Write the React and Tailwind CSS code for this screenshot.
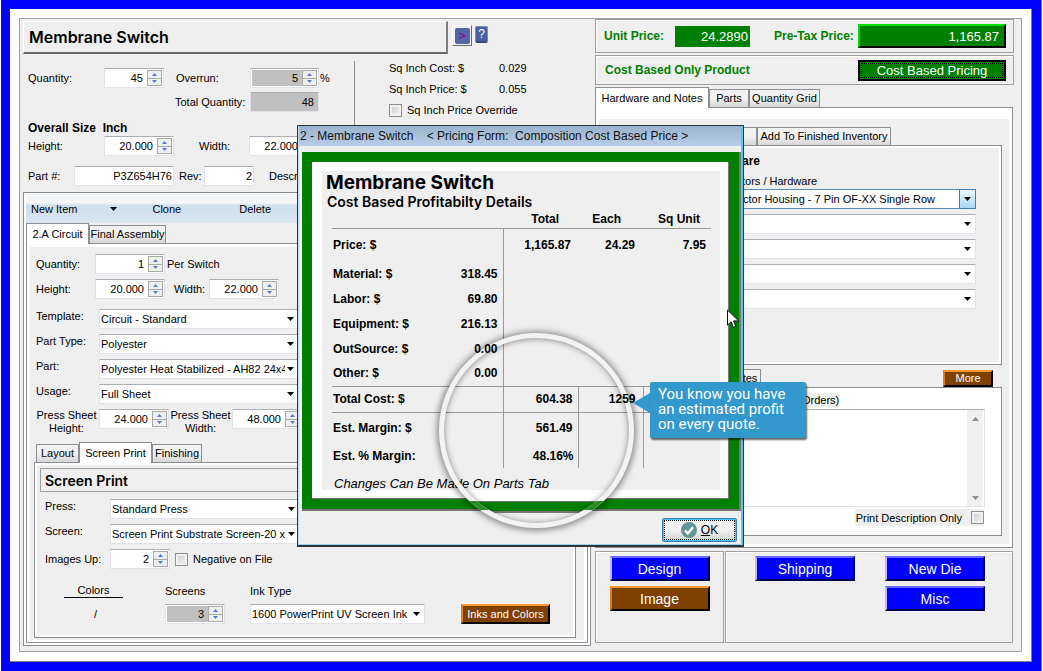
import React, { useId } from "react";

function Caret({ className = "" }) {
  return (
    <svg className={className} width="7" height="4" viewBox="0 0 7 4" aria-hidden="true">
      <path d="M0 0h7L3.5 4z" fill="currentColor" />
    </svg>
  );
}

function Spinner({ label, value, className = "", labelClass = "", gray = false, bare = false }) {
  const id = useId();
  return (
    <>
      {!bare && <label htmlFor={id} className={`shrink-0 ${labelClass}`}>{label}</label>}
      <div className={`flex h-5 shrink-0 items-center border border-[#e2e3ea] border-t-[#abadb3] bg-white p-px ${className}`}>
        <input
          id={id}
          aria-label={bare ? label : undefined}
          defaultValue={value}
          className={`h-full w-full min-w-0 pr-1 text-right outline-none ${gray ? "bg-[#c0c0c0]" : "bg-white"}`}
        />
        <div className="flex h-full w-[15px] shrink-0 flex-col border border-[#a9a9a9] bg-[#efefef]">
          <button type="button" aria-label={`Increase ${label}`} className="flex flex-1 items-center justify-center border-b border-[#a9a9a9] text-[#5b7ac7]">
            <svg width="5" height="3" viewBox="0 0 5 3"><path d="M0 3h5L2.5 0z" fill="currentColor" /></svg>
          </button>
          <button type="button" aria-label={`Decrease ${label}`} className="flex flex-1 items-center justify-center text-[#5b7ac7]">
            <svg width="5" height="3" viewBox="0 0 5 3"><path d="M0 0h5L2.5 3z" fill="currentColor" /></svg>
          </button>
        </div>
      </div>
    </>
  );
}

function Field({ label, value, className = "", labelClass = "" }) {
  const id = useId();
  return (
    <>
      <label htmlFor={id} className={`shrink-0 ${labelClass}`}>{label}</label>
      <input
        id={id}
        defaultValue={value}
        className={`h-5 min-w-0 shrink-0 border border-[#e2e3ea] border-t-[#abadb3] px-1 text-right outline-none ${className}`}
      />
    </>
  );
}

function Select({ id, label, value, className = "", pad = "pl-px", active = false }) {
  return (
    <div className={`relative flex h-5 ${className}`}>
      <select
        id={id}
        aria-label={label}
        defaultValue={value}
        className={`h-full w-full appearance-none overflow-hidden border bg-white pr-[13px] text-clip whitespace-nowrap outline-none ${pad} ${active ? "border-[#5a8cb8]" : "border-[#e2e3ea] border-t-[#abadb3]"}`}
      >
        <option>{value}</option>
      </select>
      <span className={`pointer-events-none absolute inset-y-0 right-0 flex w-[17px] items-center justify-center ${active ? "border border-[#3c7fb1] bg-linear-to-b from-[#eaf6fd] to-[#a7d9f5]" : ""}`}>
        <Caret />
      </span>
    </div>
  );
}

function SelectRow({ label, value, labelClass, className }) {
  const id = useId();
  return (
    <div className="flex h-5 items-start">
      <label htmlFor={id} className={`shrink-0 leading-[14px] ${labelClass}`}>{label}</label>
      <Select id={id} value={value} className={className} />
    </div>
  );
}

function Check({ label, before = false, className = "" }) {
  return (
    <label className={`flex items-center ${before ? "flex-row-reverse gap-[9px]" : "gap-[5px]"} ${className}`}>
      <input
        type="checkbox"
        className="h-[13px] w-[13px] shrink-0 appearance-none border border-[#8e8f8f] bg-linear-to-br from-[#c8ccd2] to-[#f6f6f6] outline-2 -outline-offset-3 outline-[#f2f2f2]"
      />
      <span>{label}</span>
    </label>
  );
}

function Tab({ children, active = false, className = "" }) {
  return (
    <button
      type="button"
      role="tab"
      aria-selected={active}
      className={`shrink-0 border border-b-0 border-[#8c8e94] text-center leading-none whitespace-nowrap ${active ? "relative -mb-px h-[21px] bg-white" : "h-[18px] bg-linear-to-b from-[#f2f2f2] from-50% to-[#d6d6d6]"} ${className}`}
    >
      {children}
    </button>
  );
}

const BROWN = "border-2 border-t-[#ff9933] border-l-[#e07c1c] border-r-black border-b-black bg-[#804000] text-white leading-none";
const BLUE = "border-2 border-t-[#6666ff] border-l-[#b8b8ff] border-r-[#000050] border-b-[#000050] bg-[#0000ff] text-white leading-none";

function ActionButton({ children, tone }) {
  return (
    <button type="button" className={`h-[25px] w-[100px] text-[14px] ${tone}`}>{children}</button>
  );
}

function LeftColumn() {
  return (
    <div className="min-w-0">
      <div className="mt-[2px] ml-[3px] flex items-start">
        <div className="flex h-[33px] w-[425px] items-center border-t border-r-2 border-b-2 border-l border-t-white border-r-[#808080] border-b-[#696969] border-l-white pl-[5px]">
          <h1 className="font-['Inter',sans-serif] text-[16px] font-semibold">Membrane Switch</h1>
        </div>
        <button type="button" aria-label="Next" className="mt-1 ml-1 flex h-[21px] w-5 items-center justify-center border border-t-white border-r-[#696969] border-b-[#696969] border-l-white">
          <span className="flex h-4 w-[15px] items-center justify-center rounded-xs bg-[#5566a8] text-[12px] leading-none text-[#800080]">&gt;</span>
        </button>
        <button type="button" aria-label="Help" className="mt-[5px] ml-[3px] h-[17px] w-[13px] rounded-xs border border-b-2 border-[#7c8cc0] border-b-[#3a4674] bg-[#4a5f9e] text-[12px] leading-none text-white">?</button>
      </div>

      <div className="flex">
        <div className="w-[334px] shrink-0 pt-[14px] pl-2">
          <div className="flex h-5 items-center">
            <Spinner label="Quantity:" value="45" labelClass="w-[76px]" className="w-[60px]" />
            <Spinner label="Overrun:" value="5" gray labelClass="ml-3 w-[74px]" className="w-[69px]" />
            <span className="ml-px">%</span>
          </div>
          <div className="mt-1 flex h-5 items-center pl-[147px]">
            <Field label="Total Quantity:" value="48" labelClass="w-[75px]" className="w-[69px] bg-[#c0c0c0]" />
          </div>
          <h2 className="mt-2 h-4 text-[12px] leading-4 font-bold whitespace-pre">Overall Size  Inch</h2>
          <div className="flex h-5 items-center">
            <Spinner label="Height:" value="20.000" labelClass="w-[76px]" className="w-[70px]" />
            <Spinner label="Width:" value="22.000" labelClass="ml-[25px] w-[50px]" className="w-[70px]" />
          </div>
          <div className="mt-[10px] mb-[6px] flex h-5 items-center">
            <Field label="Part #:" value="P3Z654H76" labelClass="w-[46px]" className="w-[100px] bg-white px-px" />
            <Field label="Rev:" value="2" labelClass="ml-[5px] w-[25px]" className="w-[50px] bg-white px-px" />
            <span className="ml-[15px]">Descr</span>
          </div>
        </div>
        <div className="mt-[7px] flex flex-col gap-[7px] self-start border-l border-[#8c8c8c] pb-12 pl-[34px] leading-[14px]">
          <div className="flex"><span className="w-[110px]">Sq Inch Cost: $</span><span>0.029</span></div>
          <div className="flex"><span className="w-[110px]">Sq Inch Price: $</span><span>0.055</span></div>
          <Check label="Sq Inch Price Override" />
        </div>
      </div>

      <div className="mr-[2px] ml-[3px] border border-[#8c8e94] bg-white p-[2px] pt-px">
        <div className="flex h-[29px] items-center bg-linear-to-b from-[#f4f6fa] from-30% via-[#d0dfee] via-40% to-[#d9e6f2] pl-[5px]">
          <button type="button" className="flex items-center gap-[33px]">New Item <Caret /></button>
          <button type="button" className="ml-[35px]">Clone</button>
          <button type="button" className="ml-[58px]">Delete</button>
        </div>
        <div role="tablist" className="flex h-5 items-end bg-[#efefef]">
          <Tab active className="w-[63px]">2.A Circuit</Tab>
          <Tab className="w-[77px]">Final Assembly</Tab>
        </div>
        <div className="border border-[#8c8e94]">
          <div className="border-[3px] border-b-2 border-white bg-[#efefef] pt-[7px]">
            <div className="flex flex-col gap-[5px] pl-[6px]">
              <div className="flex h-5 items-center">
                <Spinner label="Quantity:" value="1" labelClass="w-[59px]" className="w-[70px]" />
                <span className="ml-[2px]">Per Switch</span>
              </div>
              <div className="mb-[5px] flex h-5 items-center">
                <Spinner label="Height:" value="20.000" labelClass="w-[59px]" className="w-[70px]" />
                <Spinner label="Width:" value="22.000" labelClass="ml-[9px] w-[35px]" className="w-[70px]" />
              </div>
              <SelectRow label="Template:" value="Circuit - Standard" labelClass="w-[63px]" className="w-[200px]" />
              <SelectRow label="Part Type:" value="Polyester" labelClass="w-[63px]" className="w-[200px]" />
              <SelectRow label="Part:" value="Polyester Heat Stabilized - AH82 24x4" labelClass="w-[63px]" className="w-[200px]" />
              <SelectRow label="Usage:" value="Full Sheet" labelClass="w-[63px]" className="w-[200px]" />
              <div className="flex h-5 items-start leading-[13px]">
                <Spinner label="Press Sheet Height:" value="24.000" labelClass="mr-[2px] w-[61px] text-center" className="w-[70px]" />
                <Spinner label="Press Sheet Width:" value="48.000" labelClass="mr-px ml-px w-[61px] text-center" className="w-[70px]" />
              </div>
            </div>

            <div role="tablist" className="mt-[13px] ml-[6px] flex h-5 items-end">
              <Tab className="w-[43px]">Layout</Tab>
              <Tab active className="w-[73px]">Screen Print</Tab>
              <Tab className="w-[50px]">Finishing</Tab>
            </div>
            <div className="mr-2 mb-[2px] ml-1 border border-[#8c8e94]">
              <div className="border-2 border-white bg-[#efefef] pb-[11px]">
                <h2 className="mx-[3px] mt-[3px] h-6 border border-[#a0a0a0] pl-1 font-['Inter',sans-serif] text-[14px] leading-6 font-semibold">Screen Print</h2>
                <div className="mt-[7px] flex flex-col gap-[5px] pl-2">
                  <SelectRow label="Press:" value="Standard Press" labelClass="w-[65px]" className="w-[190px]" />
                  <SelectRow label="Screen:" value="Screen Print Substrate Screen-20 x" labelClass="w-[65px]" className="w-[190px]" />
                  <div className="flex h-5 items-center">
                    <Spinner label="Images Up:" value="2" labelClass="w-[65px]" className="w-[60px]" />
                    <Check label="Negative on File" className="ml-[5px]" />
                  </div>
                </div>
                <div className="mt-[15px] grid grid-cols-[120px_85px_211px_auto] items-center justify-start gap-y-[6px] pl-2">
                  <span className="ml-[19px] w-[59px] border-b border-black text-center leading-[13px]">Colors</span>
                  <span>Screens</span>
                  <span>Ink Type</span>
                  <span />
                  <span className="ml-[49px]">/</span>
                  <div className="flex">
                    <Spinner label="Screens" value="3" gray bare className="w-[60px]" />
                  </div>
                  <Select label="Ink Type" value="1600 PowerPrint UV Screen Ink" className="w-[175px]" />
                  <button type="button" className={`h-5 w-[89px] whitespace-nowrap ${BROWN}`}>Inks and Colors</button>
                </div>
              </div>
            </div>
          </div>
        </div>
      </div>
    </div>
  );
}

function RightColumn() {
  return (
    <div className="min-w-0 pl-[2px] leading-[14px]">
      <div className="flex h-[34px] items-center border border-[#a0a0a0] pr-[7px] pl-2 text-[12px] shadow-[inset_1px_1px_0_#fff]">
        <span className="w-[71px] font-bold text-[#008000]">Unit Price:</span>
        <output className="h-[21px] w-[75px] bg-[#008000] pr-[2px] text-right text-[13px] leading-[21px] text-white">24.2890</output>
        <span className="ml-6 font-bold text-[#008000]">Pre-Tax Price:</span>
        <button type="button" className="ml-auto h-6 w-[148px] border-2 border-t-[#00e000] border-r-black border-b-black border-l-[#00e000] bg-[#008000] pr-[5px] text-right text-[13px] leading-none text-white">1,165.87</button>
      </div>
      <div className="mt-[2px] flex h-[30px] items-center border border-[#a0a0a0] pr-[7px] pl-[9px] shadow-[inset_1px_1px_0_#fff]">
        <span className="text-[12px] font-bold text-[#008000]">Cost Based Only Product</span>
        <button type="button" className="ml-auto h-[21px] w-[148px] border-2 border-black bg-[#008000] p-px text-[13px] leading-none text-white">
          <span className="flex h-full items-center justify-center border border-dotted border-black">Cost Based Pricing</span>
        </button>
      </div>

      <div role="tablist" className="mt-[2px] flex h-5 items-end">
        <Tab active className="w-[114px]">Hardware and Notes</Tab>
        <Tab className="w-10">Parts</Tab>
        <Tab className="w-[71px]">Quantity Grid</Tab>
      </div>
      <div className="mr-px border border-[#8c8e94]">
        <div className="border-[3px] border-t-[11px] border-white bg-[#efefef] px-1 pt-2 pr-[7px] pb-2">
          <div role="tablist" className="flex h-[18px] items-end">
            <Tab className="w-[154px]" />
            <Tab className="w-[134px]">Add To Finished Inventory</Tab>
          </div>
          <div className="border border-[#8c8e94]">
            <div className="border-2 border-white pt-[6px] pr-[23px] pb-[53px] pl-[136px]">
              <h3 className="text-[12px] font-bold">are</h3>
              <p className="mt-[6px]">tors / Hardware</p>
              <div className="mt-px flex flex-col gap-[5px]">
                <Select label="Hardware 1" value="ctor Housing - 7 Pin OF-XX Single Row" pad="pl-0" active />
                <Select label="Hardware 2" value="" />
                <Select label="Hardware 3" value="" />
                <Select label="Hardware 4" value="" />
                <Select label="Hardware 5" value="" />
              </div>
            </div>
          </div>
          <div className="mt-[5px] flex h-[17px] items-end justify-between pr-[9px] pl-[136px]">
            <Tab className="w-[22px]">tes</Tab>
            <button type="button" className={`h-[17px] w-[50px] ${BROWN}`}>More</button>
          </div>
          <div className="border border-[#8c8e94] bg-white pt-[5px] pr-4 pb-[9px] pl-[136px]">
            <label htmlFor="order-note" className="ml-[62px] block w-[38px] bg-[#efefef]">Orders)</label>
            <div className="mt-[2px] flex h-[98px] border border-[#e2e3ea] border-t-[#abadb3] pr-px">
              <textarea id="order-note" className="min-w-0 flex-1 resize-none outline-none" />
              <div className="flex w-4 flex-col justify-between bg-[#efefef] text-[#8a8a8a]">
                <button type="button" aria-label="Scroll up" className="flex h-[17px] items-center justify-center"><Caret className="rotate-180" /></button>
                <button type="button" aria-label="Scroll down" className="flex h-[17px] items-center justify-center"><Caret /></button>
              </div>
            </div>
            <Check before label="Print Description Only" className="mt-[2px] mr-px ml-auto h-[17px] w-fit bg-[#efefef] pl-px" />
          </div>
        </div>
      </div>

      <div className="mt-[3px] mr-px flex h-[92px] gap-px">
        <div className="flex w-[129px] shrink-0 flex-col items-center gap-[5px] border border-[#a0a0a0] pt-1 shadow-[inset_1px_1px_0_#fff]">
          <ActionButton tone={BLUE}>Design</ActionButton>
          <ActionButton tone={BROWN}>Image</ActionButton>
        </div>
        <div className="grid min-w-0 flex-1 grid-cols-[100px_100px] content-start gap-x-[30px] gap-y-[5px] border border-[#a0a0a0] pt-1 pl-[29px] shadow-[inset_1px_1px_0_#fff]">
          <ActionButton tone={BLUE}>Shipping</ActionButton>
          <ActionButton tone={BLUE}>New Die</ActionButton>
          <span />
          <ActionButton tone={BLUE}>Misc</ActionButton>
        </div>
      </div>
    </div>
  );
}

const COSTS = [
  ["Material: $", "318.45"],
  ["Labor: $", "69.80"],
  ["Equipment: $", "216.13"],
  ["OutSource: $", "0.00"],
  ["Other: $", "0.00"],
];

function PricingDialog() {
  return (
    <section role="dialog" aria-label="Pricing Form" className="absolute top-[125px] left-[297px] h-[422px] w-[447px] border border-b-2 border-[#333] bg-[#efefef]">
      <div className="flex h-full flex-col border-r-2 border-b border-l border-r-[#5fc4ee] border-b-[#9bd0ea] border-l-[#c4dcf0]">
        <header className="h-5 bg-linear-to-b from-[#9ab3ce] to-[#b9cee8] pl-px text-[12px] leading-[21px] whitespace-pre text-[#111]">2 - Membrane Switch    &lt; Pricing Form:  Composition Cost Based Price &gt;</header>
        <div className="mt-[6px] ml-[3px] border-r-2 border-b-2 border-r-[#777] border-b-[#777]">
          <div className="border-10 border-[#008000] bg-white">
            <div className="border-r border-b border-[#777] bg-white pt-[9px] pr-2 pb-2 pl-[10px]">
              <div className="h-[319px] bg-[#efefef]">
                <h2 className="pt-[1px] pl-1 font-['Inter',sans-serif] text-[19px] leading-[22px] font-bold">Membrane Switch</h2>
                <h3 className="pl-[5px] font-['Inter',sans-serif] text-[14px] leading-4 font-semibold">Cost Based Profitabilty Details</h3>
                <table className="ml-[10px] w-[379px] table-fixed border-collapse text-[12px] leading-none font-bold">
                  <colgroup>
                    <col className="w-[90px]" />
                    <col className="w-[81px]" />
                    <col className="w-[75px]" />
                    <col className="w-[65px]" />
                    <col className="w-[68px]" />
                  </colgroup>
                  <thead>
                    <tr className="h-[18px] border-b border-[#999] text-right">
                      <th />
                      <th />
                      <th className="pr-[19px]">Total</th>
                      <th className="pr-[22px]">Each</th>
                      <th className="pr-[11px]">Sq Unit</th>
                    </tr>
                  </thead>
                  <tbody className="text-right">
                    <tr className="h-[33px]">
                      <th className="pl-px text-left">Price: $</th>
                      <td className="border-r border-[#999]" />
                      <td className="pr-[7px]">1,165.87</td>
                      <td className="pr-2">24.29</td>
                      <td className="pr-[5px]">7.95</td>
                    </tr>
                    {COSTS.map(([name, cost]) => (
                      <tr key={name} className="h-[25px]">
                        <th className="pl-px text-left whitespace-nowrap">{name}</th>
                        <td className="border-r border-[#999] pr-[5px]">
                          <span className="relative z-10">{cost}</span>
                        </td>
                        <td />
                        <td />
                        <td />
                      </tr>
                    ))}
                    <tr className="h-[26px] border-y border-[#999]">
                      <th className="pl-px text-left">Total Cost: $</th>
                      <td className="border-r border-[#999]" />
                      <td className="border-r border-[#999] pr-[5px]">604.38</td>
                      <td className="border-r border-[#999] pr-[7px]">
                        <span className="relative z-10">1259</span>
                      </td>
                      <td />
                    </tr>
                    <tr className="h-[32px]">
                      <th className="pl-px text-left">Est. Margin: $</th>
                      <td className="border-r border-[#999]" />
                      <td className="border-r border-[#999] pr-[5px]">561.49</td>
                      <td className="border-r border-[#999]" />
                      <td />
                    </tr>
                    <tr className="h-[24px]">
                      <th className="pl-px text-left">Est. % Margin:</th>
                      <td className="border-r border-[#999]" />
                      <td className="border-r border-[#999] pr-1">48.16%</td>
                      <td className="border-r border-[#999]" />
                      <td />
                    </tr>
                  </tbody>
                </table>
                <p className="mt-2 pl-3 text-[13px] leading-4 italic">Changes Can Be Made On Parts Tab</p>
              </div>
            </div>
          </div>
        </div>
        <footer className="mt-[7px] mr-1 flex justify-end">
          <button type="button" className="h-6 w-[75px] rounded-xs border border-[#3c7fb1] bg-linear-to-b from-[#f2f2f2] from-50% to-[#d0d0d0] p-px shadow-[inset_0_0_0_1px_#45c6f2]">
            <span className="flex h-full items-center justify-center gap-1 border border-dotted border-black text-[12px]">
              <svg width="16" height="16" viewBox="0 0 16 16" aria-hidden="true">
                <circle cx="8" cy="8" r="8" fill="#5f9594" />
                <path d="M3.8 8.4l3 3 5.2-6.2" fill="none" stroke="#fff" strokeWidth="2.4" />
              </svg>
              <span><u>O</u>K</span>
            </span>
          </button>
        </footer>
      </div>
    </section>
  );
}

function Lens() {
  return (
    <svg className="pointer-events-none absolute top-[320px] left-[426px]" width="220" height="220" viewBox="0 0 220 220" aria-hidden="true">
      <defs>
        <filter id="soft" x="-10%" y="-10%" width="120%" height="120%"><feGaussianBlur stdDeviation="3" /></filter>
        <clipPath id="inside"><circle cx="110.5" cy="110.5" r="93" /></clipPath>
        <clipPath id="band"><rect x="0" y="181" width="220" height="9" /></clipPath>
      </defs>
      <g clipPath="url(#inside)">
        <rect y="174" width="220" height="8" fill="#fff" />
        <rect y="181" width="220" height="1" fill="#777" />
        <rect y="182" width="220" height="10" fill="#008000" />
        <rect y="191" width="220" height="2" fill="#777" />
      </g>
      <circle cx="110.5" cy="111" r="96" fill="none" stroke="#000" strokeOpacity="0.45" strokeWidth="7" filter="url(#soft)" />
      <circle cx="110.5" cy="110.5" r="95" fill="none" stroke="#f3f3f3" strokeWidth="5" />
      <circle cx="110.5" cy="110.5" r="95" fill="none" stroke="#269026" strokeWidth="5" clipPath="url(#band)" />
    </svg>
  );
}

function Callout() {
  return (
    <aside className="absolute top-[382px] left-[633px] z-20 flex items-start">
      <svg className="mt-[11px]" width="17" height="20" viewBox="0 0 17 20" aria-hidden="true">
        <path d="M17 0v20L0 10z" fill="#3399cc" />
      </svg>
      <p className="h-[56px] w-[156px] rounded-xs bg-[#3399cc] pt-[5px] pl-2 font-['Roboto',sans-serif] text-[15px] leading-[15px] whitespace-nowrap text-white shadow-[1px_2px_2px_rgba(0,0,0,0.6)]">
        You know you have<br />an estimated profit<br />on every quote.
      </p>
    </aside>
  );
}

export default function App() {
  return (
    <div className="relative flex min-h-screen bg-white pr-[2px] pl-px font-['Liberation_Sans',Arial,sans-serif] text-[11px] leading-[14px] text-black">
      <div className="flex flex-1 border-9 border-[#0000ff] shadow-[1px_0_0_#808080]">
        <main className="flex-1 border-r border-b border-[#808080] bg-white p-[9px]">
          <div className="grid min-h-full grid-cols-[573fr_421fr] border border-[#a0a0a0] bg-[#efefef] pr-[7px] pb-[5px]">
            <LeftColumn />
            <RightColumn />
          </div>
        </main>
      </div>
      <PricingDialog />
      <Lens />
      <Callout />
      <svg className="pointer-events-none absolute top-[309px] left-[727px]" width="13" height="20" viewBox="0 0 13 20" aria-hidden="true">
        <path d="M.5 1v15.2l3.6-3.4 2.4 5.6 2.4-1-2.4-5.5h5.2z" fill="#fff" stroke="#111" />
      </svg>
    </div>
  );
}
